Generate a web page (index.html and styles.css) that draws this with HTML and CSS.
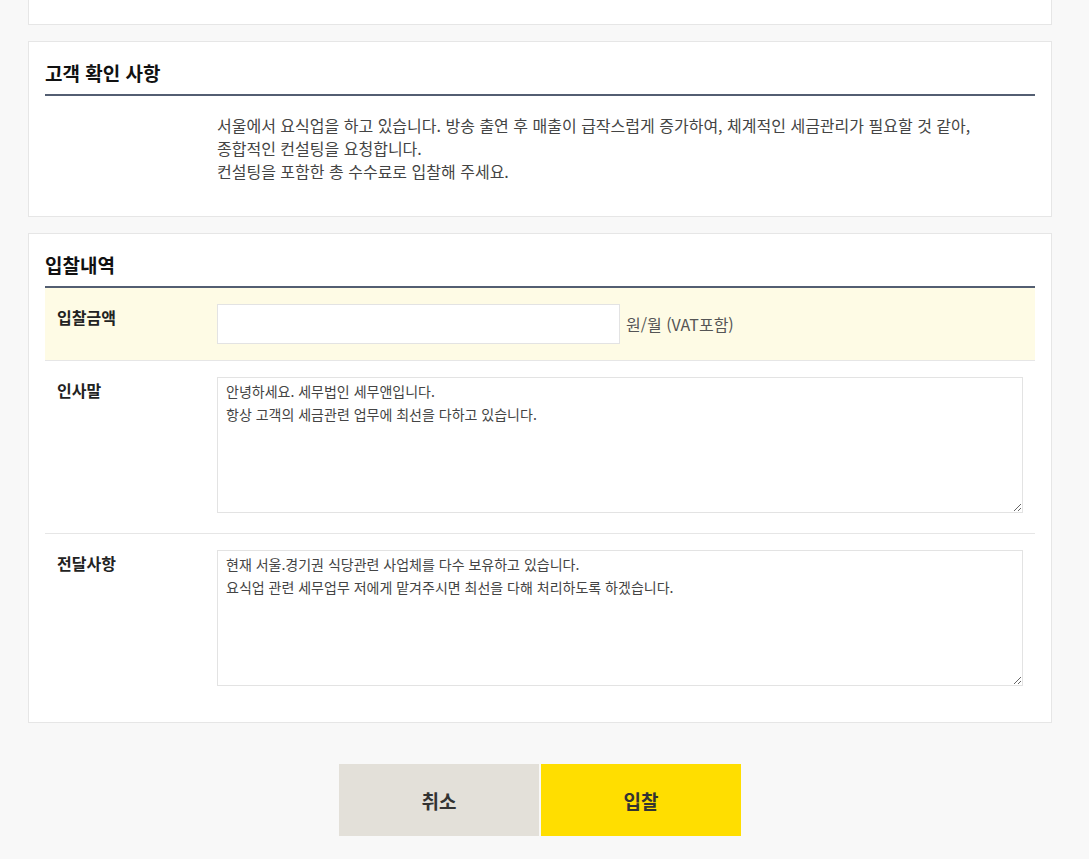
FILE: index.html
```html
<!DOCTYPE html>
<html lang="ko">
<head>
<meta charset="utf-8">
<title>입찰하기</title>
<link rel="stylesheet" href="styles.css">
</head>
<body>
<div class="wrap">
  <div class="card card-stub"></div>

  <section class="card">
    <h2 class="sec-title">고객 확인 사항</h2>
    <div class="desc">
      서울에서 요식업을 하고 있습니다. 방송 출연 후 매출이 급작스럽게 증가하여, 체계적인 세금관리가 필요할 것 같아,<br>
      종합적인 컨설팅을 요청합니다.<br>
      컨설팅을 포함한 총 수수료로 입찰해 주세요.
    </div>
  </section>

  <section class="card card-bid">
    <h2 class="sec-title">입찰내역</h2>
    <div class="row row-price">
      <div class="label">입찰금액</div>
      <div class="field">
        <input class="price-input" type="text">
        <span class="unit">원/월 (VAT포함)</span>
      </div>
    </div>
    <div class="row">
      <div class="label">인사말</div>
      <div class="field">
        <textarea class="area">안녕하세요. 세무법인 세무앤입니다.
항상 고객의 세금관련 업무에 최선을 다하고 있습니다.</textarea>
      </div>
    </div>
    <div class="row row-last">
      <div class="label">전달사항</div>
      <div class="field">
        <textarea class="area">현재 서울.경기권 식당관련 사업체를 다수 보유하고 있습니다.
요식업 관련 세무업무 저에게 맡겨주시면 최선을 다해 처리하도록 하겠습니다.</textarea>
      </div>
    </div>
  </section>

  <div class="actions">
    <button class="btn btn-cancel" type="button">취소</button>
    <button class="btn btn-submit" type="button">입찰</button>
  </div>
</div>
</body>
</html>
```
FILE: styles.css
```css
* { box-sizing: border-box; }
html, body {
  margin: 0;
  padding: 0;
  background: #f8f8f8;
  font-family: "Noto Sans CJK KR", "Noto Sans", sans-serif;
  color: #444;
}
.wrap {
  width: 1024px;
  margin-left: 28px;
  display: flex;
  flex-direction: column;
  gap: 16px;
}
.card {
  background: #fff;
  border: 1px solid #e6e6e6;
  padding: 0 16px;
}
.card-stub {
  height: 25px;
  border-top: none;
}
.sec-title {
  margin: 0;
  font-size: 19px;
  font-weight: 700;
  color: #111;
  line-height: 26px;
  padding: 18px 0 8px;
  border-bottom: 2px solid #535e72;
}
.desc {
  padding: 18px 0 33px 172px;
  font-size: 16px;
  line-height: 23px;
  color: #444;
}
.card-bid { padding-bottom: 16px; }
.row {
  display: flex;
  padding: 16px 12px 20px;
  border-bottom: 1px solid #e6e6e6;
}
.row-last { border-bottom: none; }
.row-price {
  background: #fefbe5;
  padding-bottom: 16px;
}
.label {
  width: 160px;
  flex: none;
  font-size: 16px;
  font-weight: 700;
  color: #222;
  line-height: 24px;
  padding-top: 1px;
}
.field {
  flex: 1;
  display: flex;
  align-items: center;
  gap: 6px;
}
.price-input {
  width: 403px;
  height: 40px;
  border: 1px solid #e3e3e3;
  background: #fff;
  margin: 0;
  padding: 0 8px;
  font-family: inherit;
  font-size: 14px;
  outline: none;
}
.unit {
  font-size: 16px;
  color: #555;
}
.area {
  display: block;
  width: 100%;
  height: 136px;
  margin: 0;
  border: 1px solid #e3e3e3;
  padding: 2px 8px;
  font-family: inherit;
  font-size: 14px;
  line-height: 23px;
  color: #444;
  background: #fff;
  resize: vertical;
  outline: none;
}
.actions {
  display: flex;
  justify-content: center;
  gap: 2px;
  margin-top: 25px;
}
.btn {
  width: 200px;
  height: 72px;
  border: none;
  font-family: inherit;
  font-size: 19px;
  font-weight: 700;
  color: #333;
  cursor: pointer;
}
.btn-cancel { background: #e3e0d9; }
.btn-submit { background: #ffde00; }
```
